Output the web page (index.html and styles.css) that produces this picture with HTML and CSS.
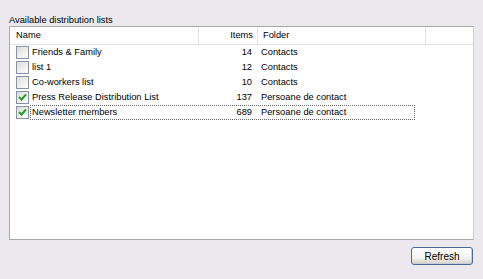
FILE: index.html
```html
<!DOCTYPE html>
<html lang="en">
<head>
  <meta charset="UTF-8">
  <title>Distribution lists</title>
  <link rel="stylesheet" href="styles.css">
</head>
<body>
  <div class="panel">
    <div class="caption">Available distribution lists</div>

    <div class="listview">
      <div class="header">
        <div class="col col-name">Name</div>
        <div class="col col-items">Items</div>
        <div class="col col-folder">Folder</div>
        <div class="col col-fill"></div>
      </div>

      <div class="row">
        <span class="check"></span>
        <div class="cells">
          <span class="cell-name">Friends &amp; Family</span>
          <span class="cell-items">14</span>
          <span class="cell-folder">Contacts</span>
        </div>
      </div>
      <div class="row">
        <span class="check"></span>
        <div class="cells">
          <span class="cell-name">list 1</span>
          <span class="cell-items">12</span>
          <span class="cell-folder">Contacts</span>
        </div>
      </div>
      <div class="row">
        <span class="check"></span>
        <div class="cells">
          <span class="cell-name">Co-workers list</span>
          <span class="cell-items">10</span>
          <span class="cell-folder">Contacts</span>
        </div>
      </div>
      <div class="row">
        <span class="check checked">
          <svg width="11" height="11" viewBox="0 0 11 11"><path d="M2 5 L4.5 7.5 L9 2.5" fill="none" stroke="#21a121" stroke-width="2"/></svg>
        </span>
        <div class="cells">
          <span class="cell-name">Press Release Distribution List</span>
          <span class="cell-items">137</span>
          <span class="cell-folder">Persoane de contact</span>
        </div>
      </div>
      <div class="row">
        <span class="check checked">
          <svg width="11" height="11" viewBox="0 0 11 11"><path d="M2 5 L4.5 7.5 L9 2.5" fill="none" stroke="#21a121" stroke-width="2"/></svg>
        </span>
        <div class="cells focused">
          <span class="cell-name">Newsletter members</span>
          <span class="cell-items">689</span>
          <span class="cell-folder">Persoane de contact</span>
        </div>
      </div>
    </div>

    <div class="actions">
      <button class="btn">Refresh</button>
    </div>
  </div>
</body>
</html>
```

FILE: styles.css
```css
body {
  margin: 0;
  background-color: #ebe9ed;
  font-family: 'Liberation Sans', Arial, sans-serif;
  font-size: 9.3px;
  color: #000;
}

.panel {
  padding: 14px 9px 0 9px;
}

.caption {
  height: 12px;
  line-height: 12px;
}

.listview {
  width: 463px;
  height: 212px;
  background: #fff;
  border: 1px solid #a8a7ab;
  border-right-color: #d4d0c8;
  border-bottom-color: #a8a7ab;
}

.header {
  display: flex;
  height: 17px;
  border-bottom: 1px solid #e3e2e6;
  line-height: 17px;
}

.col {
  border-right: 1px solid #e3e2e6;
  box-sizing: border-box;
}

.col-name {
  width: 189px;
  padding-left: 6px;
}

.col-items {
  width: 59px;
  text-align: right;
  padding-right: 4px;
}

.col-folder {
  width: 168px;
  padding-left: 5px;
}

.col-fill {
  flex: 1;
  border-right: none;
}

.row {
  display: flex;
  align-items: center;
  height: 15px;
}

.check {
  display: flex;
  align-items: center;
  justify-content: center;
  box-sizing: border-box;
  width: 13px;
  height: 13px;
  margin-left: 6px;
  margin-right: 1px;
  border: 1px solid #8593a6;
  background: linear-gradient(135deg, #dcdcd7 0%, #f4f4f2 70%, #fff 100%);
}

.cells {
  display: flex;
  box-sizing: border-box;
  width: 385px;
  height: 15px;
  line-height: 13px;
  border: 1px dotted transparent;
}

.cells.focused {
  border-color: #6a6a6a;
}

.cell-name {
  width: 166px;
  padding-left: 1px;
  box-sizing: border-box;
}

.cell-items {
  width: 59px;
  text-align: right;
  padding-right: 4px;
  box-sizing: border-box;
}

.cell-folder {
  flex: 1;
  padding-left: 5px;
  white-space: nowrap;
}

.actions {
  display: flex;
  justify-content: flex-end;
  padding-top: 7px;
  padding-right: 1px;
}

.btn {
  width: 62px;
  height: 18px;
  padding: 0;
  font-family: 'Liberation Sans', Arial, sans-serif;
  font-size: 10px;
  color: #000;
  border: 1px solid #4a6a94;
  border-radius: 3px;
  background: linear-gradient(#ffffff 0%, #f4f4f0 60%, #d6d0c5 100%);
  box-shadow: inset -1px -1px 0 #c5cedd;
}
```
